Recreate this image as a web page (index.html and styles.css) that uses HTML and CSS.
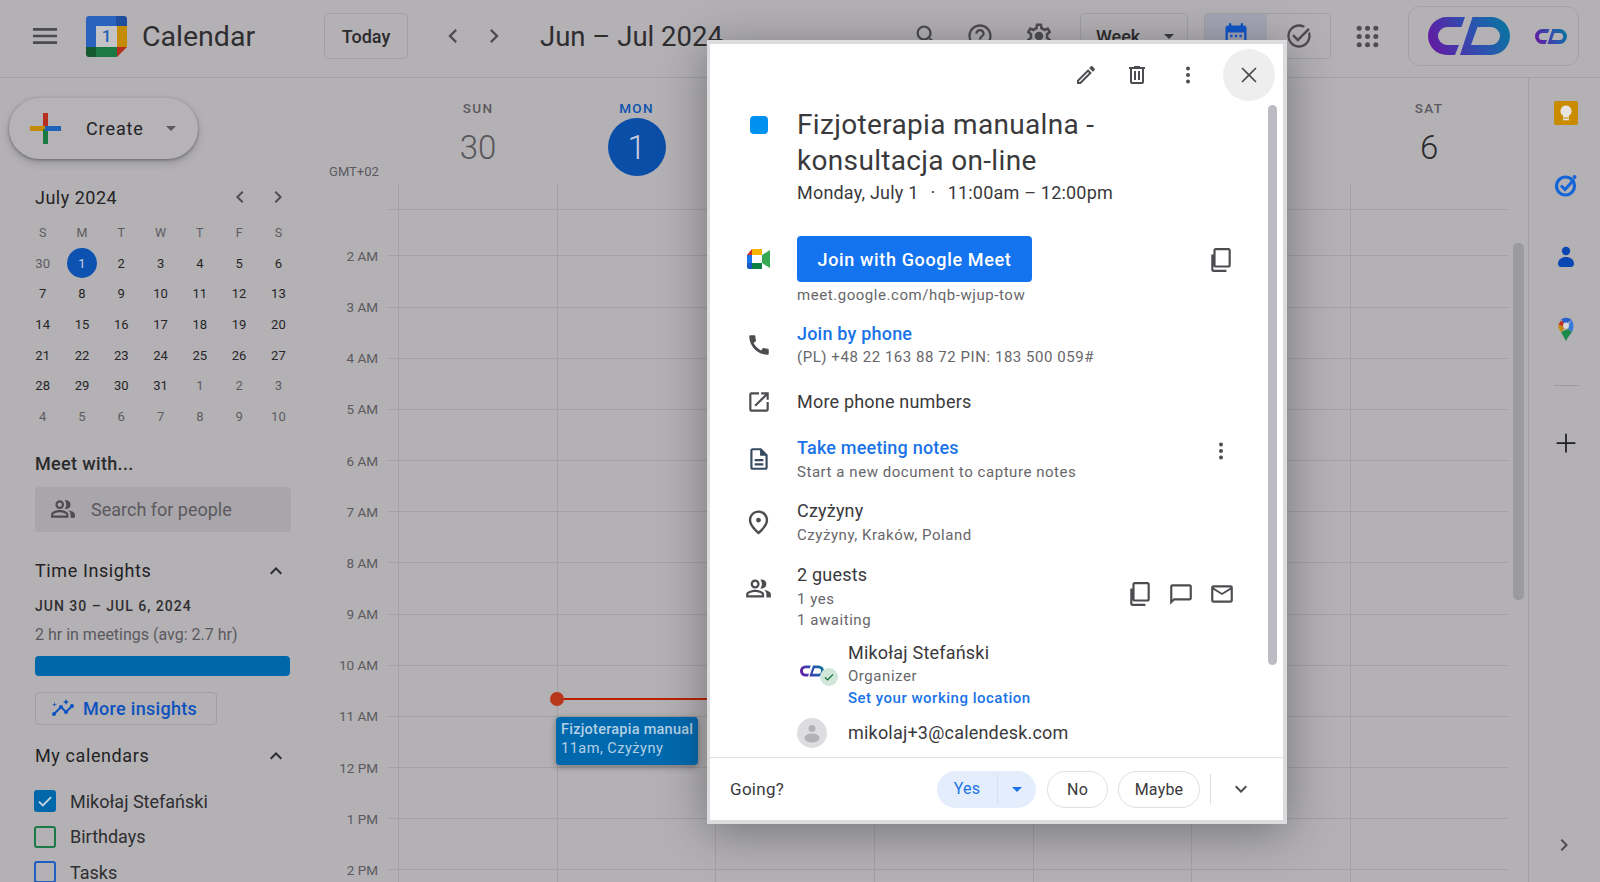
FILE: index.html
```html
<!DOCTYPE html>
<html lang="en">
<head>
<meta charset="utf-8">
<title>Calendar</title>
<link rel="stylesheet" href="styles.css">
</head>
<body>
<svg class="sprite" xmlns="http://www.w3.org/2000/svg">
  <defs>
    <linearGradient id="cdg" gradientUnits="userSpaceOnUse" x1="0" y1="38" x2="82" y2="0"><stop offset="0" stop-color="#6a14a0"/><stop offset=".55" stop-color="#2f4fb0"/><stop offset="1" stop-color="#04799c"/></linearGradient>
  </defs>
  <symbol id="i-menu" viewBox="0 0 24 24"><path d="M3 18h18v-2H3v2zm0-5h18v-2H3v2zm0-7v2h18V6H3z"/></symbol>
  <symbol id="i-left" viewBox="0 0 24 24"><path d="M15.41 7.41L14 6l-6 6 6 6 1.41-1.41L10.83 12z"/></symbol>
  <symbol id="i-right" viewBox="0 0 24 24"><path d="M8.59 16.59L10 18l6-6-6-6-1.41 1.41L13.17 12z"/></symbol>
  <symbol id="i-up" viewBox="0 0 24 24"><path d="M12 8l-6 6 1.41 1.41L12 10.83l4.59 4.58L18 14z"/></symbol>
  <symbol id="i-down" viewBox="0 0 24 24"><path d="M16.59 8.59L12 13.17 7.41 8.59 6 10l6 6 6-6z"/></symbol>
  <symbol id="i-search" viewBox="0 0 24 24"><path d="M15.5 14h-.79l-.28-.27A6.471 6.471 0 0 0 16 9.5 6.5 6.5 0 1 0 9.5 16c1.61 0 3.09-.59 4.23-1.57l.27.28v.79l5 4.99L20.49 19l-4.99-5zm-6 0C7.01 14 5 11.99 5 9.5S7.01 5 9.5 5 14 7.01 14 9.5 11.99 14 9.5 14z"/></symbol>
  <symbol id="i-help" viewBox="0 0 24 24"><path d="M11 18h2v-2h-2v2zm1-16C6.48 2 2 6.48 2 12s4.48 10 10 10 10-4.48 10-10S17.52 2 12 2zm0 18c-4.41 0-8-3.59-8-8s3.59-8 8-8 8 3.59 8 8-3.59 8-8 8zm0-14c-2.21 0-4 1.79-4 4h2c0-1.1.9-2 2-2s2 .9 2 2c0 2-3 1.75-3 5h2c0-2.25 3-2.5 3-5 0-2.21-1.79-4-4-4z"/></symbol>
  <symbol id="i-gear" viewBox="0 0 24 24"><path d="M19.43 12.98c.04-.32.07-.64.07-.98 0-.34-.03-.66-.07-.98l2.11-1.65c.19-.15.24-.42.12-.64l-2-3.46c-.09-.16-.26-.25-.44-.25-.06 0-.12.01-.17.03l-2.49 1c-.52-.4-1.08-.73-1.69-.98l-.38-2.65C14.46 2.18 14.25 2 14 2h-4c-.25 0-.46.18-.49.42l-.38 2.65c-.61.25-1.17.59-1.69.98l-2.49-1c-.06-.02-.12-.03-.18-.03-.17 0-.34.09-.43.25l-2 3.46c-.13.22-.07.49.12.64l2.11 1.65c-.04.32-.07.65-.07.98 0 .33.03.66.07.98l-2.11 1.65c-.19.15-.24.42-.12.64l2 3.46c.09.16.26.25.44.25.06 0 .12-.01.17-.03l2.49-1c.52.4 1.08.73 1.69.98l.38 2.65c.03.24.24.42.49.42h4c.25 0 .46-.18.49-.42l.38-2.65c.61-.25 1.17-.59 1.69-.98l2.49 1c.06.02.12.03.18.03.17 0 .34-.09.43-.25l2-3.46c.12-.22.07-.49-.12-.64l-2.11-1.65zm-1.98-1.71c.04.31.05.52.05.73 0 .21-.02.43-.05.73l-.14 1.13.89.7 1.08.84-.7 1.21-1.27-.51-1.04-.42-.9.68c-.43.32-.84.56-1.25.73l-1.06.43-.16 1.13-.2 1.35h-1.4l-.19-1.35-.16-1.13-1.06-.43c-.43-.18-.83-.41-1.23-.71l-.91-.7-1.06.43-1.27.51-.7-1.21 1.08-.84.89-.7-.14-1.13c-.03-.31-.05-.54-.05-.74s.02-.43.05-.73l.14-1.13-.89-.7-1.08-.84.7-1.21 1.27.51 1.04.42.9-.68c.43-.32.84-.56 1.25-.73l1.06-.43.16-1.13.2-1.35h1.39l.19 1.35.16 1.13 1.06.43c.43.18.83.41 1.23.71l.91.7 1.06-.43 1.27-.51.7 1.21-1.07.85-.89.7.14 1.13z"/><circle cx="12" cy="12" r="3.4"/></symbol>
  <symbol id="i-apps" viewBox="0 0 24 24"><circle cx="4" cy="4" r="2.4"/><circle cx="12" cy="4" r="2.4"/><circle cx="20" cy="4" r="2.4"/><circle cx="4" cy="12" r="2.4"/><circle cx="12" cy="12" r="2.4"/><circle cx="20" cy="12" r="2.4"/><circle cx="4" cy="20" r="2.4"/><circle cx="12" cy="20" r="2.4"/><circle cx="20" cy="20" r="2.4"/></symbol>
  <symbol id="i-taskalt" viewBox="0 0 24 24"><path d="M21.3 6.6l-1.5-1.5L11 14l-3.4-3.4-1.5 1.5 4.9 4.9zM12 22C6.5 22 2 17.5 2 12S6.5 2 12 2c1.9 0 3.7.5 5.2 1.5l-1.5 1.5C14.6 4.4 13.3 4 12 4c-4.4 0-8 3.6-8 8s3.6 8 8 8 8-3.6 8-8c0-.7-.1-1.4-.3-2l1.6-1.6c.4 1.1.7 2.3.7 3.6 0 5.5-4.5 10-10 10z"/></symbol>
  <symbol id="i-cal" viewBox="0 0 24 24"><path d="M19 3h-1V1h-2v2H8V1H6v2H5c-1.1 0-2 .9-2 2v14c0 1.1.9 2 2 2h14c1.1 0 2-.9 2-2V5c0-1.1-.9-2-2-2zm0 16H5V9h14v10z"/><path d="M7 11h2v2H7zm4 0h2v2h-2zm4 0h2v2h-2z"/></symbol>
  <symbol id="i-people" viewBox="0 0 24 24"><path d="M16.67 13.13C18.04 14.06 19 15.32 19 17v3h4v-3c0-2.18-3.57-3.47-6.33-3.87zM15 12c2.21 0 4-1.79 4-4s-1.79-4-4-4c-.47 0-.91.1-1.33.24C14.5 5.27 15 6.58 15 8s-.5 2.73-1.33 3.76c.42.14.86.24 1.33.24zM9 12c2.21 0 4-1.79 4-4s-1.79-4-4-4-4 1.79-4 4 1.79 4 4 4zm0-6c1.1 0 2 .9 2 2s-.9 2-2 2-2-.9-2-2 .9-2 2-2zM9 13c-2.67 0-8 1.34-8 4v3h16v-3c0-2.66-5.33-4-8-4zm6 5H3v-.99C3.2 16.29 6.3 15 9 15s5.8 1.29 6 2v1z"/></symbol>
  <symbol id="i-edit" viewBox="0 0 24 24"><path d="M14.06 9.02l.92.92L5.92 19H5v-.92l9.06-9.06M17.66 3c-.25 0-.51.1-.7.29l-1.83 1.83 3.75 3.75 1.83-1.83c.39-.39.39-1.02 0-1.41l-2.34-2.34c-.2-.2-.45-.29-.71-.29zm-3.6 3.19L3 17.25V21h3.75L17.81 9.94l-3.75-3.75z"/></symbol>
  <symbol id="i-trash" viewBox="0 0 24 24"><path d="M15 4V3H9v1H4v2h1v13c0 1.1.9 2 2 2h10c1.1 0 2-.9 2-2V6h1V4h-5zm2 15H7V6h10v13zM9 8h2v9H9zm4 0h2v9h-2z"/></symbol>
  <symbol id="i-dots" viewBox="0 0 24 24"><circle cx="12" cy="5.5" r="2"/><circle cx="12" cy="12" r="2"/><circle cx="12" cy="18.5" r="2"/></symbol>
  <symbol id="i-close" viewBox="0 0 24 24"><path d="M19 6.1L17.9 5 12 10.9 6.1 5 5 6.1l5.9 5.9L5 17.9 6.1 19l5.9-5.9 5.9 5.9 1.1-1.1-5.9-5.9z"/></symbol>
  <symbol id="i-copy" viewBox="0 0 24 24"><path d="M3 7h2v14h12v2H5c-1.1 0-2-.9-2-2V7zm4-6h12c1.1 0 2 .9 2 2v14c0 1.1-.9 2-2 2H7c-1.1 0-2-.9-2-2V3c0-1.1.9-2 2-2zm0 2v14h12V3H7z"/></symbol>
  <symbol id="i-phone" viewBox="0 0 24 24"><path d="M20.01 15.38c-1.23 0-2.42-.2-3.53-.56a.977.977 0 0 0-1.01.24l-1.57 1.97c-2.83-1.35-5.48-3.9-6.89-6.83l1.95-1.66c.27-.28.35-.67.24-1.02-.37-1.11-.56-2.3-.56-3.53 0-.54-.45-.99-.99-.99H4.19C3.65 3 3 3.24 3 3.99 3 13.28 10.73 21 20.01 21c.71 0 .99-.63.99-1.18v-3.45c0-.54-.45-.99-.99-.99z"/></symbol>
  <symbol id="i-open" viewBox="0 0 24 24"><path d="M19 19H5V5h7V3H5a2 2 0 0 0-2 2v14a2 2 0 0 0 2 2h14c1.1 0 2-.9 2-2v-7h-2v7zM14 3v2h3.59l-9.83 9.83 1.41 1.41L19 6.41V10h2V3h-7z"/></symbol>
  <symbol id="i-doc" viewBox="0 0 24 24"><path d="M8 16h8v2H8zm0-4h8v2H8zm6-10H6c-1.1 0-2 .9-2 2v16c0 1.1.89 2 1.99 2H18c1.1 0 2-.9 2-2V8l-6-6zm4 18H6V4h7v5h5v11z"/></symbol>
  <symbol id="i-pin" viewBox="0 0 24 24"><path d="M12 12c-1.1 0-2-.9-2-2s.9-2 2-2 2 .9 2 2-.9 2-2 2zm6-1.8C18 6.57 15.35 4 12 4s-6 2.57-6 6.2c0 2.34 1.95 5.44 6 9.14 4.05-3.7 6-6.8 6-9.14zM12 2c4.2 0 8 3.22 8 8.2 0 3.32-2.67 7.25-8 11.8-5.33-4.55-8-8.48-8-11.8C4 5.22 7.8 2 12 2z"/></symbol>
  <symbol id="i-chat" viewBox="0 0 24 24"><path d="M20 3H4c-1.1 0-2 .9-2 2v17l4-4h14c1.1 0 2-.9 2-2V5c0-1.1-.9-2-2-2zm0 13H5.2L4 17.2V5h16v11z"/></symbol>
  <symbol id="i-mail" viewBox="0 0 24 24"><path d="M22 6c0-1.1-.9-2-2-2H4c-1.1 0-2 .9-2 2v12c0 1.1.9 2 2 2h16c1.1 0 2-.9 2-2V6zm-2 0l-8 5-8-5h16zm0 12H4V8l8 5 8-5v10z"/></symbol>
  <symbol id="i-insights" viewBox="0 0 24 24"><path d="M21 8c-1.45 0-2.26 1.44-1.93 2.51l-3.55 3.56c-.3-.09-.74-.09-1.04 0l-2.55-2.55C12.27 10.45 11.46 9 10 9c-1.45 0-2.27 1.44-1.93 2.52l-4.56 4.55C2.44 15.74 1 16.55 1 18c0 1.1.9 2 2 2 1.45 0 2.26-1.44 1.93-2.51l4.55-4.56c.3.09.74.09 1.04 0l2.55 2.55C12.73 16.55 13.54 18 15 18c1.45 0 2.27-1.44 1.93-2.52l3.56-3.55c1.07.33 2.51-.48 2.51-1.93 0-1.1-.9-2-2-2z"/><path d="M15 9l.94-2.07L18 6l-2.06-.93L15 3l-.92 2.07L12 6l2.08.93zM3.5 11L4 9l2-.5L4 8l-.5-2L3 8l-2 .5L3 9z"/></symbol>
  <symbol id="i-check" viewBox="0 0 24 24"><path d="M9 16.2L4.8 12l-1.7 1.7L9 19.6 21 7.6l-1.7-1.7z"/></symbol>
  <symbol id="i-plus" viewBox="0 0 24 24"><path d="M19.5 12.7h-6.8v6.8h-1.4v-6.8H4.5v-1.400h6.800V4.500h1.400v6.800h6.800z"/></symbol>
  <symbol id="i-cd" viewBox="0 0 82 38"><path fill="url(#cdg)" d="M19 0H37L33.500 10H19a9 9 0 0 0 0 18H31L27 38H19A19 19 0 0 1 19 0z"/><path fill="url(#cdg)" fill-rule="evenodd" d="M44.500 0H63a19 19 0 0 1 0 38H32zM49.500 10L43 28H63a9 9 0 0 0 0-18z"/></symbol>
</svg>

<div class="app">
  <header class="topbar">
    <svg class="ic ic-menu"><use href="#i-menu"/></svg>
    <svg class="cal-logo" viewBox="0 0 41 41">
      <path fill="#2a62c0" d="M3 0h27v10H10v21H0V3a3 3 0 0 1 3-3z"/>
      <path fill="#1f4f9c" d="M30 0h8a3 3 0 0 1 3 3v7H30z"/>
      <path fill="#c48c06" d="M31 10h10v21H31z"/>
      <path fill="#1b7a42" d="M10 31h21v10H10z"/>
      <path fill="#145a30" d="M0 31h10v10H3a3 3 0 0 1-3-3z"/>
      <path fill="#b7301f" d="M31 31h10L31 41z"/>
      <rect x="10" y="10" width="21" height="21" fill="#c4c3c6"/>
      <text class="cal-logo-num" x="20.500" y="26">1</text>
    </svg>
    <span class="brand">Calendar</span>
    <button class="btn-today">Today</button>
    <svg class="ic ic-nav1"><use href="#i-left"/></svg>
    <svg class="ic ic-nav2"><use href="#i-right"/></svg>
    <span class="range">Jun – Jul 2024</span>
    <svg class="ic ic-search"><use href="#i-search"/></svg>
    <svg class="ic ic-help"><use href="#i-help"/></svg>
    <svg class="ic ic-gear"><use href="#i-gear"/></svg>
    <div class="week-select"><span>Week</span><i class="caret caret-dark"></i></div>
    <div class="seg">
      <div class="seg-item seg-on"><svg class="ic ic-blue"><use href="#i-cal"/></svg></div>
      <div class="seg-item"><svg class="ic"><use href="#i-taskalt"/></svg></div>
    </div>
    <svg class="ic-apps"><use href="#i-apps"/></svg>
    <div class="brand-box">
      <svg class="cd-big"><use href="#i-cd"/></svg>
      <svg class="cd-small"><use href="#i-cd"/></svg>
    </div>
  </header>

  <div class="main">
    <aside class="sidebar">
      <button class="create">
        <svg class="plus-logo" viewBox="0 0 31 31">
          <rect x="13" y="0" width="5" height="15" fill="#b7301f"/>
          <rect x="0" y="13" width="15" height="5" fill="#c48c06"/>
          <rect x="13" y="16" width="5" height="15" fill="#1b7a42"/>
          <rect x="15" y="13" width="16" height="5" fill="#1f62b8"/>
        </svg>
        <span class="create-label">Create</span>
        <i class="caret"></i>
      </button>

      <div class="mini-head">
        <span class="mini-title">July 2024</span>
        <svg class="ic ic-sm"><use href="#i-left"/></svg>
        <svg class="ic ic-sm ic-mini-next"><use href="#i-right"/></svg>
      </div>
      <div class="mini-grid">
        <span class="wd">S</span><span class="wd">M</span><span class="wd">T</span><span class="wd">W</span><span class="wd">T</span><span class="wd">F</span><span class="wd">S</span>
        <span class="muted">30</span><span class="today-mini">1</span><span>2</span><span>3</span><span>4</span><span>5</span><span>6</span>
        <span>7</span><span>8</span><span>9</span><span>10</span><span>11</span><span>12</span><span>13</span>
        <span>14</span><span>15</span><span>16</span><span>17</span><span>18</span><span>19</span><span>20</span>
        <span>21</span><span>22</span><span>23</span><span>24</span><span>25</span><span>26</span><span>27</span>
        <span>28</span><span>29</span><span>30</span><span>31</span><span class="muted">1</span><span class="muted">2</span><span class="muted">3</span>
        <span class="muted">4</span><span class="muted">5</span><span class="muted">6</span><span class="muted">7</span><span class="muted">8</span><span class="muted">9</span><span class="muted">10</span>
      </div>

      <h2 class="side-h side-meet">Meet with...</h2>
      <div class="people-search">
        <svg class="ic ic-people"><use href="#i-people"/></svg>
        <span>Search for people</span>
      </div>

      <div class="side-row side-ti">
        <h2 class="side-h side-h-reg">Time Insights</h2>
        <svg class="ic ic-dark"><use href="#i-up"/></svg>
      </div>
      <div class="ti-range">JUN 30 – JUL 6, 2024</div>
      <div class="ti-text">2 hr in meetings (avg: 2.7 hr)</div>
      <div class="ti-bar"></div>
      <button class="more-insights">
        <svg class="ic ic-ins"><use href="#i-insights"/></svg>
        <span>More insights</span>
      </button>

      <div class="side-row side-mycal">
        <h2 class="side-h side-h-reg">My calendars</h2>
        <svg class="ic ic-dark"><use href="#i-up"/></svg>
      </div>
      <ul class="cal-list">
        <li><span class="cb cb-on"><svg class="cb-check"><use href="#i-check"/></svg></span>Mikołaj Stefański</li>
        <li><span class="cb cb-green"></span>Birthdays</li>
        <li><span class="cb cb-blue"></span>Tasks</li>
      </ul>
    </aside>

    <section class="cal-area">
      <div class="day-head">
        <div class="gmt">GMT+02</div>
        <div class="dh"><span class="dh-name">SUN</span><span class="dh-num dh-past">30</span></div>
        <div class="dh dh-today"><span class="dh-name">MON</span><span class="dh-num">1</span></div>
        <div class="dh"></div><div class="dh"></div><div class="dh"></div><div class="dh"></div>
        <div class="dh"><span class="dh-name">SAT</span><span class="dh-num">6</span></div>
      </div>
      <div class="grid-body">
        <div class="vlines"><i></i><i></i><i></i><i></i><i></i><i></i><i></i></div>
        <div class="first-line"></div>
        <div class="hour"><span>2 AM</span><i></i></div>
        <div class="hour"><span>3 AM</span><i></i></div>
        <div class="hour"><span>4 AM</span><i></i></div>
        <div class="hour"><span>5 AM</span><i></i></div>
        <div class="hour"><span>6 AM</span><i></i></div>
        <div class="hour"><span>7 AM</span><i></i></div>
        <div class="hour"><span>8 AM</span><i></i></div>
        <div class="hour"><span>9 AM</span><i></i></div>
        <div class="hour"><span>10 AM</span><i></i></div>
        <div class="hour"><span>11 AM</span><i></i></div>
        <div class="hour"><span>12 PM</span><i></i></div>
        <div class="hour"><span>1 PM</span><i></i></div>
        <div class="hour"><span>2 PM</span><i></i></div>
        <div class="now-line"></div>
        <div class="now-dot"></div>
        <div class="event"><div>Fizjoterapia manual</div><div class="event-sub">11am, Czyżyny</div></div>
        <div class="grid-scroll"></div>
      </div>
    </section>

    <aside class="rail">
      <svg class="rail-ic" viewBox="0 0 24 24"><rect width="24" height="24" rx="2" fill="#c98c00"/><path fill="#e6e3e0" d="M12 4.500a5.500 5.500 0 0 0-3 10.100V16.500h6v-1.900a5.500 5.500 0 0 0-3-10.100z"/><rect x="9" y="17.500" width="6" height="1.800" fill="#e6e3e0"/></svg>
      <svg class="rail-ic" viewBox="0 0 24 24"><circle cx="11.500" cy="13" r="9" fill="none" stroke="#1565d8" stroke-width="3.200"/><path d="M7 12.500l4 4 9-10" fill="none" stroke="#1565d8" stroke-width="3"/><circle cx="20.500" cy="4" r="2" fill="#1565d8"/></svg>
      <svg class="rail-ic" viewBox="0 0 24 24"><circle cx="12" cy="6" r="4.200" fill="#0b47b0"/><path fill="#0b47b0" d="M4 19c0-5 4-7 8-7s8 2 8 7c0 2-1.500 3-3 3H7c-1.500 0-3-1-3-3z"/></svg>
      <svg class="rail-ic" viewBox="0 0 24 24"><path fill="#1b8a4a" d="M7 15l5 9c1-3 4-6 6-9l-4-3z"/><path fill="#c48c06" d="M4.500 7.500C4 11 5.500 13 7 15l4-4.500z"/><path fill="#c4301f" d="M4.500 7.500L7 3.500l4.500 3-1 3.500z"/><path fill="#2a62d0" d="M7 2.500C10 0 15 0 17.500 3l-6 4.500z"/><path fill="#3a78e0" d="M17.500 3c2.500 3 2.500 7.500.5 12l-4-3 1-5z"/><circle cx="12" cy="8.500" r="3" fill="#d9d8db"/></svg>
      <div class="rail-sep"></div>
      <svg class="rail-plus"><use href="#i-plus"/></svg>
      <svg class="ic rail-chev"><use href="#i-right"/></svg>
    </aside>
  </div>

  <div class="modal">
    <div class="m-tools">
      <span class="m-tool"><svg class="ic"><use href="#i-edit"/></svg></span>
      <span class="m-tool"><svg class="ic"><use href="#i-trash"/></svg></span>
      <span class="m-tool"><svg class="ic"><use href="#i-dots"/></svg></span>
      <span class="m-close"><svg class="ic"><use href="#i-close"/></svg></span>
    </div>
    <div class="m-scroll"></div>
    <div class="m-body">
      <div class="row row-title">
        <div class="m-ico"><span class="ev-color"></span></div>
        <div class="row-main">
          <h1 class="ev-title">Fizjoterapia manualna - konsultacja on-line</h1>
          <div class="ev-date">Monday, July 1 <span class="ev-sep">·</span> 11:00am – 12:00pm</div>
        </div>
      </div>

      <div class="row row-meet">
        <div class="m-ico m-ico-meet">
          <svg class="meet-logo" viewBox="0 0 23 20">
            <path fill="#c8321f" d="M0 6l5-6v6z"/>
            <path fill="#f4b400" d="M5 0h10v6H5z"/>
            <path fill="#1a73e8" d="M0 6h5v8H0z"/>
            <path fill="#0b8043" d="M5 14h10v6H5z"/>
            <path fill="#1558c0" d="M0 14h5v6H2a2 2 0 0 1-2-2z"/>
            <path fill="#34a853" d="M15 6v8l8 5V1z"/>
            <rect x="5" y="6" width="10" height="8" fill="#fff"/>
          </svg>
        </div>
        <div class="row-main">
          <button class="btn-join">Join with Google Meet</button>
          <div class="sub sub-meet">meet.google.com/hqb-wjup-tow</div>
        </div>
        <svg class="ic ic-copy"><use href="#i-copy"/></svg>
      </div>

      <div class="row row-phone">
        <div class="m-ico"><svg class="ic ic-26"><use href="#i-phone"/></svg></div>
        <div class="row-main">
          <div class="link">Join by phone</div>
          <div class="sub">(PL) +48 22 163 88 72 PIN: 183 500 059#</div>
        </div>
      </div>

      <div class="row row-more">
        <div class="m-ico"><svg class="ic ic-26"><use href="#i-open"/></svg></div>
        <div class="row-main"><div class="main-t">More phone numbers</div></div>
      </div>

      <div class="row row-notes">
        <div class="m-ico"><svg class="ic ic-26 ic-navy"><use href="#i-doc"/></svg></div>
        <div class="row-main">
          <div class="link">Take meeting notes</div>
          <div class="sub sub-notes">Start a new document to capture notes</div>
        </div>
        <svg class="ic ic-notes-dots"><use href="#i-dots"/></svg>
      </div>

      <div class="row row-loc">
        <div class="m-ico"><svg class="ic ic-pin"><use href="#i-pin"/></svg></div>
        <div class="row-main">
          <div class="main-t">Czyżyny</div>
          <div class="sub">Czyżyny, Kraków, Poland</div>
        </div>
      </div>

      <div class="row row-guests">
        <div class="m-ico m-ico-top"><svg class="ic ic-guests"><use href="#i-people"/></svg></div>
        <div class="row-main">
          <div class="main-t">2 guests</div>
          <div class="sub sub-yes">1 yes</div>
          <div class="sub">1 awaiting</div>
        </div>
        <div class="g-acts">
          <svg class="ic ic-26"><use href="#i-copy"/></svg>
          <svg class="ic ic-26"><use href="#i-chat"/></svg>
          <svg class="ic ic-26"><use href="#i-mail"/></svg>
        </div>
      </div>

      <div class="guest guest-org">
        <div class="g-ava">
          <svg class="org-logo"><use href="#i-cd"/></svg>
          <span class="org-check"><svg class="org-check-i"><use href="#i-check"/></svg></span>
        </div>
        <div>
          <div class="main-t">Mikołaj Stefański</div>
          <div class="sub">Organizer</div>
          <div class="link-sm">Set your working location</div>
        </div>
      </div>

      <div class="guest guest-2">
        <div class="g-ava">
          <svg class="anon" viewBox="0 0 30 30"><circle cx="15" cy="15" r="15" fill="#dedddf"/><circle cx="15" cy="10.500" r="3.500" fill="#b3b2b4"/><ellipse cx="15" cy="20" rx="7.500" ry="4.500" fill="#b3b2b4"/></svg>
        </div>
        <div class="main-t">mikolaj+3@calendesk.com</div>
      </div>
    </div>

    <footer class="m-foot">
      <span class="going">Going?</span>
      <div class="pill-yes"><span class="pill-yes-l">Yes</span><span class="pill-yes-r"><i class="caret caret-blue"></i></span></div>
      <span class="pill pill-no">No</span>
      <span class="pill pill-maybe">Maybe</span>
      <span class="foot-div"></span>
      <svg class="ic"><use href="#i-down"/></svg>
    </footer>
  </div>
</div>
</body>
</html>
```

FILE: styles.css
```css
* { box-sizing: border-box; }
html, body { margin: 0; padding: 0; }
body { font-family: Roboto, "Liberation Sans", sans-serif; color: #2b2a2c; }
.sprite { display: block; width: 0; height: 0; position: absolute; }
button { font: inherit; color: inherit; background: none; padding: 0; }
h1, h2, ul { margin: 0; padding: 0; font: inherit; list-style: none; }

.app { position: relative; width: 1600px; height: 882px; overflow: hidden; background: #b3b1b4; display: flex; flex-direction: column; }

.ic { width: 24px; height: 24px; flex: none; fill: #4e4c50; display: block; }
.ic-26 { width: 26px; height: 26px; }
.ic-dark { fill: #2b2a2c; }
.ic-blue { fill: #0f55c8; }
.ic-navy { fill: #364a60; }
.ic-pin { width: 29px; height: 29px; }
.ic-guests { width: 27px; height: 27px; }

/* top bar */
.topbar { height: 78px; flex: none; border-bottom: 1px solid #a3a1a5; display: flex; align-items: center; padding-bottom: 5px; }
.ic-menu { margin-left: 29px; width: 32px; height: 32px; fill: #4b4a4e; }
.cal-logo { width: 41px; height: 41px; margin-left: 25px; flex: none; }
.cal-logo-num { font-size: 17px; font-weight: 500; fill: #1f62b8; text-anchor: middle; }
.brand { font-size: 28.500px; margin-left: 15px; width: 182px; color: #2e2d30; }
.btn-today { width: 84px; height: 46px; border: 1px solid #a1a0a3; border-radius: 4px; font-size: 18px; font-weight: 500; color: #2b2a2c; }
.ic-nav1 { margin-left: 31px; width: 28px; height: 28px; }
.ic-nav2 { margin-left: 13px; width: 28px; height: 28px; }
.range { font-size: 27.500px; margin-left: 32px; width: 373px; color: #2e2d30; }
.ic-search { width: 28px; height: 28px; margin-right: 25px; fill: #4b4a4e; }
.ic-help { width: 28px; height: 28px; margin-right: 30px; }
.ic-gear { width: 30px; height: 30px; margin-right: 26px; }
.week-select { width: 108px; height: 46px; border: 1px solid #a1a0a3; border-radius: 4px; display: flex; align-items: center; padding-left: 15px; font-size: 18px; font-weight: 500; }
.week-select span { width: 68px; }
.caret { display: block; width: 0; height: 0; border-left: 5px solid transparent; border-right: 5px solid transparent; border-top: 5px solid #5c5a5e; }
.caret-dark { border-top-color: #3a393c; }
.caret-blue { border-top-color: #1a73e8; }
.seg { margin-left: 16px; width: 127px; height: 46px; border: 1px solid #a1a0a3; border-radius: 4px; display: flex; overflow: hidden; }
.seg-item { flex: 1; display: flex; align-items: center; justify-content: center; }
.seg-on { background: #a4a6b5; flex: none; width: 62px; }
.seg .ic { width: 28px; height: 28px; }
.seg .ic-blue { fill: #0f55c8; }
.ic-apps { width: 25px; height: 25px; margin-left: 24px; fill: #4e4c50; flex: none; }
.brand-box { width: 171px; height: 60px; margin-left: 28px; border: 1px solid #a1a0a3; border-radius: 12px; display: flex; align-items: center; padding-left: 19px; }
.cd-big { width: 82px; height: 38px; flex: none; }
.cd-small { width: 32px; height: 15px; margin-left: 25px; flex: none; }

/* main */
.main { flex: 1; display: flex; min-height: 0; }
.sidebar { width: 324px; flex: none; padding-left: 35px; padding-top: 20px; }
.create { width: 189px; height: 61px; margin-left: -26px; display: flex; align-items: center; border: none; border-radius: 31px; background: #b5b3b6; box-shadow: 0 1px 3px rgba(40,40,40,.45), 0 4px 8px rgba(40,40,40,.2); }
.plus-logo { width: 31px; height: 31px; margin-left: 21px; flex: none; }
.create-label { font-size: 18px; font-weight: 400; margin-left: 25px; width: 80px; text-align: left; letter-spacing: .9px; color: #232224; }

.mini-head { display: flex; align-items: center; height: 24px; margin-top: 26px; }
.mini-title { font-size: 18px; width: 193px; letter-spacing: .5px; color: #232224; }
.ic-mini-next { margin-left: 14px; }
.mini-grid { margin: 8px 0 0 -12px; width: 275px; display: grid; grid-template-columns: repeat(7, 39.300px); grid-auto-rows: 30.700px; }
.mini-grid span { display: flex; align-items: center; justify-content: center; font-size: 13px; color: #262527; }
.mini-grid .wd { color: #5d5b5f; font-size: 12.500px; }
.mini-grid .muted { color: #5d5b5f; }
.mini-grid .today-mini { width: 30px; height: 30px; margin: auto; border-radius: 50%; background: #0d52b0; color: #c6cede; }

.side-h { font-size: 18px; font-weight: 500; line-height: 24px; color: #2b2a2c; letter-spacing: .35px; }
.side-h-reg { font-weight: 400; letter-spacing: .6px; color: #232224; }
.side-meet { margin-top: 20px; }
.people-search { width: 256px; height: 45px; margin-top: 11px; background: #a8a6aa; border-radius: 4px; display: flex; align-items: center; padding-left: 15px; font-size: 18px; color: #5b595e; }
.ic-people { width: 26px; height: 26px; margin-right: 15px; }
.side-row { width: 253px; display: flex; align-items: center; justify-content: space-between; height: 24px; }
.side-ti { margin-top: 27px; }
.ti-range { margin-top: 13px; line-height: 20px; font-size: 14px; font-weight: 500; letter-spacing: 1px; color: #2f2e31; }
.ti-text { margin-top: 9px; line-height: 20px; font-size: 16px; color: #5b595e; }
.ti-bar { margin-top: 11px; width: 255px; height: 20px; border-radius: 4px; background: #0067aa; }
.more-insights { margin-top: 16px; width: 182px; height: 33px; border: 1px solid #9f9ea2; border-radius: 4px; display: flex; align-items: center; padding-left: 15px; font-size: 18px; font-weight: 500; letter-spacing: .3px; color: #0d52bf; }
.ic-ins { fill: #0d52bf; margin-right: 8px; }
.side-mycal { margin-top: 19px; }
.cal-list { margin: 15.500px 0 0 -1px; }
.cal-list li { height: 35.500px; display: flex; align-items: center; font-size: 18px; color: #2f2e31; }
.cb { width: 22px; height: 22px; margin-right: 14px; border-radius: 3px; flex: none; display: flex; align-items: center; justify-content: center; }
.cb-on { background: #0067aa; }
.cb-green { border: 2px solid #1c7a4a; }
.cb-blue { border: 2px solid #1f5fc0; }
.cb-check { width: 18px; height: 18px; fill: #cdd6e0; }

/* calendar */
.cal-area { flex: 1; min-width: 0; display: flex; flex-direction: column; }
.day-head { height: 106px; flex: none; display: grid; grid-template-columns: 74.800px repeat(7, 158.500px); }
.gmt { align-self: end; text-align: right; font-size: 13px; line-height: 18px; padding: 0 20px 3px 0; color: #5b595e; }
.dh { display: flex; flex-direction: column; align-items: center; padding-top: 20px; color: #5b595e; }
.dh-name { font-size: 13.500px; line-height: 20px; font-weight: 500; letter-spacing: 1.300px; }
.dh-num { width: 58px; height: 58px; display: flex; align-items: center; justify-content: center; font-size: 33px; font-weight: 300; color: #2b2a2c; }
.dh-past { color: #58565a; }
.dh-today .dh-name { color: #0d52b0; }
.dh-today .dh-num { background: #0a4ea8; border-radius: 50%; color: #c6cede; }

.grid-body { position: relative; flex: 1; min-height: 0; }
.vlines { position: absolute; left: 74px; top: 0; bottom: 0; display: flex; }
.vlines i { display: block; width: 158.700px; border-left: 1px solid #a3a1a5; }
.first-line { height: 1px; margin: 25px 20px 20.400px 64px; background: #a3a1a5; }
.hour { height: 51.170px; width: 1184px; display: flex; align-items: center; }
.hour span { width: 54px; text-align: right; font-size: 13.500px; color: #5b595e; flex: none; }
.hour i { display: block; flex: 1; height: 1px; margin-left: 10px; background: #a3a1a5; }
.now-line { position: absolute; left: 232px; top: 514px; width: 480px; height: 2px; background: #b82000; }
.now-dot { position: absolute; left: 225.700px; top: 508px; width: 14px; height: 14px; border-radius: 50%; background: #b8361c; }
.event { position: absolute; left: 232px; top: 533px; width: 142px; height: 48px; padding: 3px 0 0 5px; background: #0069ae; border-radius: 4px; white-space: nowrap; color: #b4cfe3; font-size: 14.500px; font-weight: 500; line-height: 19px; letter-spacing: .25px; box-shadow: 0 2px 6px rgba(40,40,40,.45); }
.event-sub { font-weight: 400; letter-spacing: .5px; }
.grid-scroll { position: absolute; left: 1189px; top: 59px; width: 11px; height: 357px; background: #9b9b9f; border-radius: 5px; }

/* rail */
.rail { width: 72px; flex: none; border-left: 1px solid #a3a1a5; display: flex; flex-direction: column; align-items: center; padding: 23px 0 25px 3px; }
.rail-ic { width: 24px; height: 24px; flex: none; margin-bottom: 48px; }
.rail-sep { width: 25px; height: 1px; background: #9b9a9e; margin-top: -4px; }
.rail-plus { width: 30px; height: 30px; flex: none; margin-top: 42px; fill: #1f1e20; }
.rail-chev { margin-top: auto; margin-left: -4px; }

/* modal */
.modal { position: absolute; left: 707px; top: 40px; width: 580px; height: 784px; background: #fff; border: solid #dcdbdd; border-width: 4px 4px 4px 3px; display: flex; flex-direction: column; box-shadow: 0 8px 44px rgba(30,30,35,.42); }
.m-tools { flex: none; height: 57px; padding: 5px 8px 0 0; display: flex; justify-content: flex-end; align-items: center; }
.m-tool { width: 51px; display: flex; justify-content: center; }
.m-close { width: 52px; height: 52px; margin-left: 10px; border-radius: 50%; background: #efeeef; display: flex; align-items: center; justify-content: center; }
.m-close .ic { width: 26px; height: 26px; }
.m-scroll { position: absolute; left: 558px; top: 61px; width: 9px; height: 560px; background: #babbc3; border-radius: 5px; }
.m-body { flex: 1; min-height: 0; overflow: hidden; color: #3a393c; }
.row { display: flex; align-items: center; padding-right: 50px; }
.m-ico { width: 87px; padding-left: 10px; flex: none; display: flex; justify-content: center; }
.m-ico-top { align-self: flex-start; padding-top: 11px; }
.row-main { flex: 1; min-width: 0; }
.row-title { align-items: flex-start; margin-top: 6px; }
.ev-color { width: 18px; height: 18px; margin-top: 9px; background: #0090f0; border-radius: 4px; }
.ev-title { font-size: 28px; line-height: 35.500px; color: #3a393c; width: 330px; letter-spacing: .33px; }
.ev-date { margin-top: 4px; font-size: 18px; line-height: 22px; color: #3a393c; letter-spacing: .2px; }
.ev-sep { margin: 0 7.500px; }
.main-t { font-size: 18px; line-height: 22px; color: #3a393c; letter-spacing: .2px; }
.sub { margin-top: 3px; font-size: 15px; line-height: 18px; color: #67666a; letter-spacing: .55px; }
.link { font-size: 18px; line-height: 22px; font-weight: 500; color: #1a73e8; letter-spacing: .2px; }
.link-sm { margin-top: 4px; font-size: 15px; line-height: 18px; font-weight: 500; color: #1a73e8; letter-spacing: .5px; }
.row-meet { margin-top: 32px; align-items: flex-start; }
.m-ico-meet { padding-top: 13px; }
.meet-logo { width: 23px; height: 20px; }
.btn-join { display: block; width: 235px; height: 46px; border: none; border-radius: 4px; background: #1473ee; color: #fff; font-size: 18px; font-weight: 500; letter-spacing: .65px; }
.sub-meet { margin-top: 4px; }
.ic-copy { margin-top: 11px; width: 26px; height: 26px; margin-right: -1px; }
.row-phone { margin-top: 19px; }
.row-more { margin-top: 23px; }
.row-notes { margin-top: 22px; }
.sub-notes { margin-top: 4px; }
.ic-notes-dots { align-self: flex-start; margin-top: 2px; }
.row-loc { margin-top: 19px; }
.row-loc .sub { margin-top: 4px; }
.row-guests { margin-top: 20px; }
.sub-yes { margin-top: 4px; }
.g-acts { display: flex; gap: 15px; margin: 0 -2px 5px 0; }
.guest { display: flex; padding-left: 87px; align-items: center; }
.guest-org { margin-top: 13px; }
.guest-2 { margin-top: 11px; }
.g-ava { width: 51px; flex: none; position: relative; display: flex; align-items: center; }
.org-logo { width: 24px; height: 12px; margin: 0 0 8px 3px; }
.org-check { position: absolute; left: 23px; top: 50%; margin-top: -7px; width: 18px; height: 18px; border-radius: 50%; background: #cfe6d8; display: flex; align-items: center; justify-content: center; }
.org-check-i { width: 12px; height: 12px; fill: #0b6e38; }
.anon { width: 30px; height: 30px; }
.m-foot { flex: none; height: 63px; border-top: 1px solid #e2e2e3; display: flex; align-items: center; padding: 0 30px 0 20px; font-size: 16px; }
.going { font-size: 17px; color: #3a393c; margin-right: auto; letter-spacing: .3px; }
.pill-yes { width: 99px; height: 37px; border-radius: 19px; background: #e4edfb; display: flex; align-items: center; color: #1a73e8; letter-spacing: .2px; }
.pill-yes-l { width: 61px; text-align: center; line-height: 30px; border-right: 1px solid #d5e0f1; }
.pill-yes-r { flex: 1; display: flex; justify-content: center; }
.pill { height: 37px; border: 1px solid #dfdfe1; border-radius: 19px; display: flex; align-items: center; justify-content: center; color: #3a393c; letter-spacing: .2px; }
.pill-no { width: 61px; margin-left: 11px; }
.pill-maybe { width: 82px; margin-left: 10px; }
.foot-div { width: 1px; height: 30px; margin: 0 18px 0 10px; background: #dfdfe1; }
```
